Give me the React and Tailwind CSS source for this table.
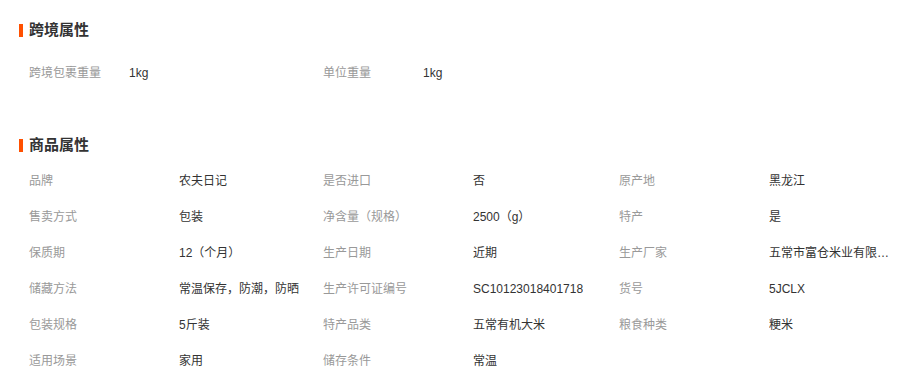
const crossBorder = [
  ['跨境包裹重量', '1kg'],
  ['单位重量', '1kg'],
]

const attrs = [
  ['品牌', '农夫日记'],
  ['是否进口', '否'],
  ['原产地', '黑龙江'],
  ['售卖方式', '包装'],
  ['净含量（规格）', '2500（g）'],
  ['特产', '是'],
  ['保质期', '12（个月）'],
  ['生产日期', '近期'],
  ['生产厂家', '五常市富仓米业有限公司'],
  ['储藏方法', '常温保存，防潮，防晒'],
  ['生产许可证编号', 'SC10123018401718'],
  ['货号', '5JCLX'],
  ['包装规格', '5斤装'],
  ['特产品类', '五常有机大米'],
  ['粮食种类', '粳米'],
  ['适用场景', '家用'],
  ['储存条件', '常温'],
]

function Title({ children }) {
  return (
    <div className="flex h-4 items-center">
      <span className="ml-[19px] h-[13px] w-[4px] bg-[#ff5000]" />
      <h3 className="ml-[6px] text-[15px] font-bold leading-4 text-[#333]">{children}</h3>
    </div>
  )
}

export default function App() {
  return (
    <div
      className="min-h-screen overflow-hidden bg-white pt-[22px] text-xs text-[#333]"
      style={{ fontFamily: '"Liberation Sans", "Noto Sans CJK SC", sans-serif' }}
    >
      <Title>跨境属性</Title>
      <ul className="mt-[17px] flex pl-[29px]">
        {crossBorder.map(([k, v]) => (
          <li key={k} className="flex h-9 w-[294px] items-center">
            <span className="w-[100px] text-[#999]">{k}</span>
            <span className="text-[#333]">{v}</span>
          </li>
        ))}
      </ul>

      <div className="mt-[46px]">
        <Title>商品属性</Title>
      </div>
      <ul className="mt-[10px] grid w-[920px] grid-cols-[294px_296px_295px] pl-[29px]">
        {attrs.map(([k, v]) => (
          <li key={k} className="flex h-9 items-center">
            <span className="w-[150px] shrink-0 text-[#999]">{k}</span>
            <span className="max-w-[122px] truncate text-[#333]">{v}</span>
          </li>
        ))}
      </ul>
    </div>
  )
}
